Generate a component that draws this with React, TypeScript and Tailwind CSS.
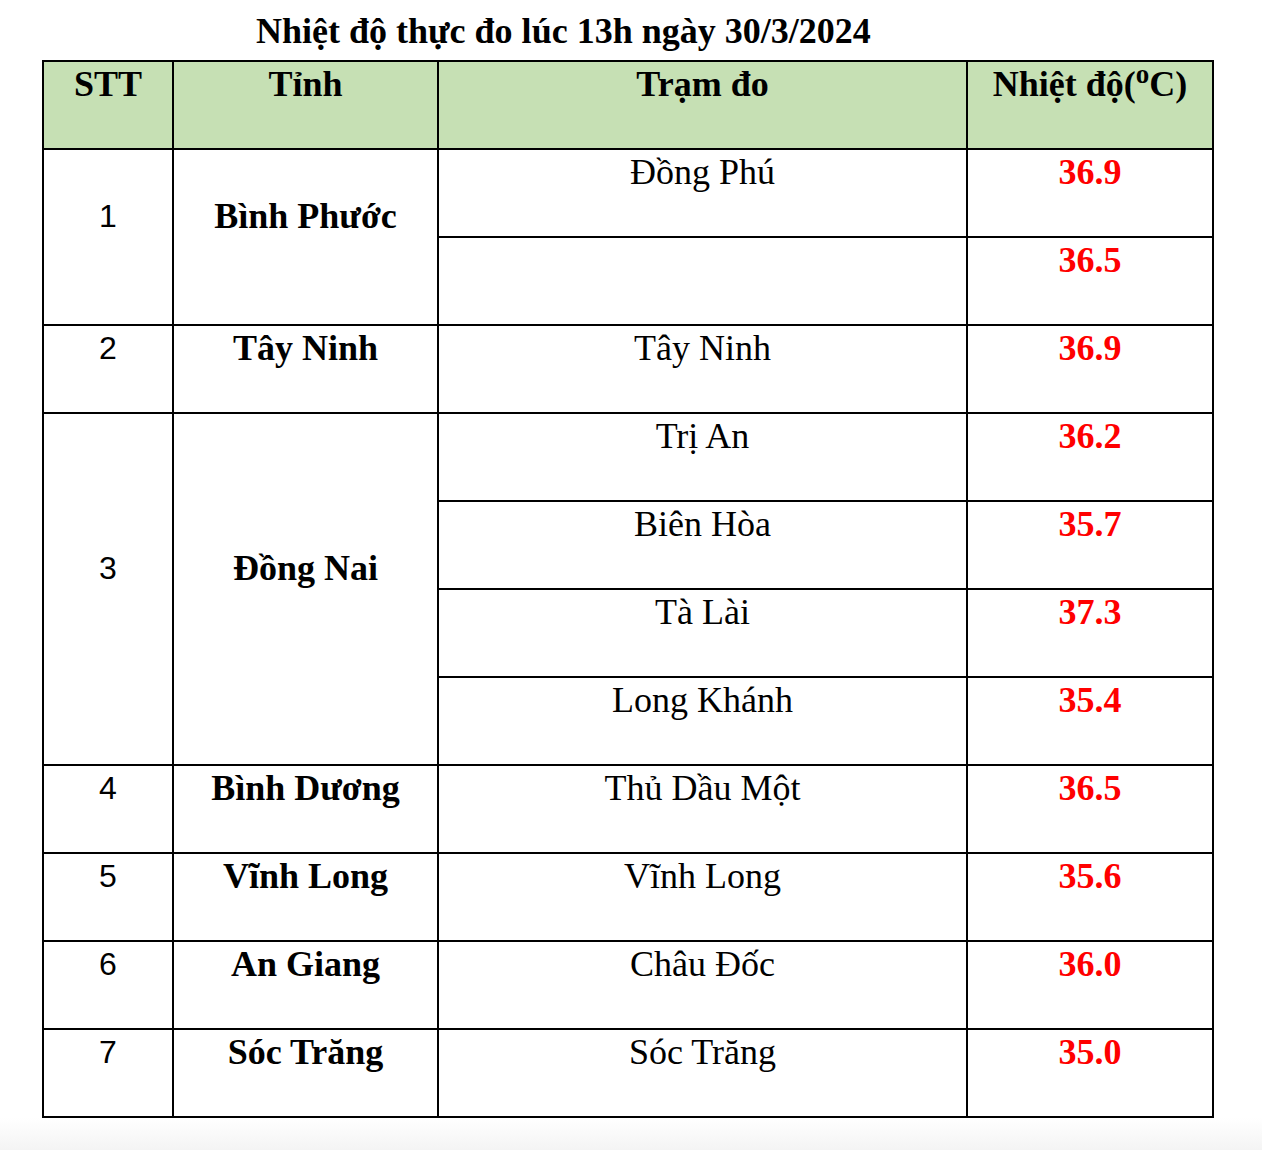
type Row = {
  stt?: string;
  tinh?: string;
  span?: number;
  tram: string;
  temp: string;
};

const rows: Row[] = [
  { stt: "1", tinh: "Bình Phước", span: 2, tram: "Đồng Phú", temp: "36.9" },
  { tram: "", temp: "36.5" },
  { stt: "2", tinh: "Tây Ninh", span: 1, tram: "Tây Ninh", temp: "36.9" },
  { stt: "3", tinh: "Đồng Nai", span: 4, tram: "Trị An", temp: "36.2" },
  { tram: "Biên Hòa", temp: "35.7" },
  { tram: "Tà Lài", temp: "37.3" },
  { tram: "Long Khánh", temp: "35.4" },
  { stt: "4", tinh: "Bình Dương", span: 1, tram: "Thủ Dầu Một", temp: "36.5" },
  { stt: "5", tinh: "Vĩnh Long", span: 1, tram: "Vĩnh Long", temp: "35.6" },
  { stt: "6", tinh: "An Giang", span: 1, tram: "Châu Đốc", temp: "36.0" },
  { stt: "7", tinh: "Sóc Trăng", span: 1, tram: "Sóc Trăng", temp: "35.0" },
];

const cell =
  "border-2 border-black text-center align-middle p-0 pb-[42px] leading-[40px]";

export default function App() {
  return (
    <div className="w-[1262px] h-[1150px] bg-white font-['Liberation_Serif',serif] text-black text-[36px] flex flex-col">
      <div className="pt-[13px] pl-[256px] leading-[36px] font-bold mb-[11px]">
        Nhiệt độ thực đo lúc 13h ngày 30/3/2024
      </div>
      <table className="ml-[42px] w-[1172px] table-fixed border-collapse">
        <colgroup>
          <col className="w-[130px]" />
          <col className="w-[265px]" />
          <col className="w-[529px]" />
          <col className="w-[246px]" />
        </colgroup>
        <thead>
          <tr className="h-[88px] bg-[#c6e0b4]">
            <th className={cell}>STT</th>
            <th className={cell}>Tỉnh</th>
            <th className={cell}>Trạm đo</th>
            <th className={cell}>
              Nhiệt độ(<sup className="text-[27px] top-[-13px]">o</sup>C)
            </th>
          </tr>
        </thead>
        <tbody>
          {rows.map((r, i) => (
            <tr key={i} className="h-[88px]">
              {r.stt && (
                <td
                  rowSpan={r.span}
                  className={`${cell} font-['Liberation_Sans',sans-serif] text-[32px]`}
                >
                  {r.stt}
                </td>
              )}
              {r.tinh && (
                <td rowSpan={r.span} className={`${cell} font-bold`}>
                  {r.tinh}
                </td>
              )}
              <td className={cell}>{r.tram}</td>
              <td className={`${cell} font-bold text-[#ff0000]`}>{r.temp}</td>
            </tr>
          ))}
        </tbody>
      </table>
      <div className="mt-auto h-[33px] bg-gradient-to-b from-white to-[#f4f4f4]" />
    </div>
  );
}
